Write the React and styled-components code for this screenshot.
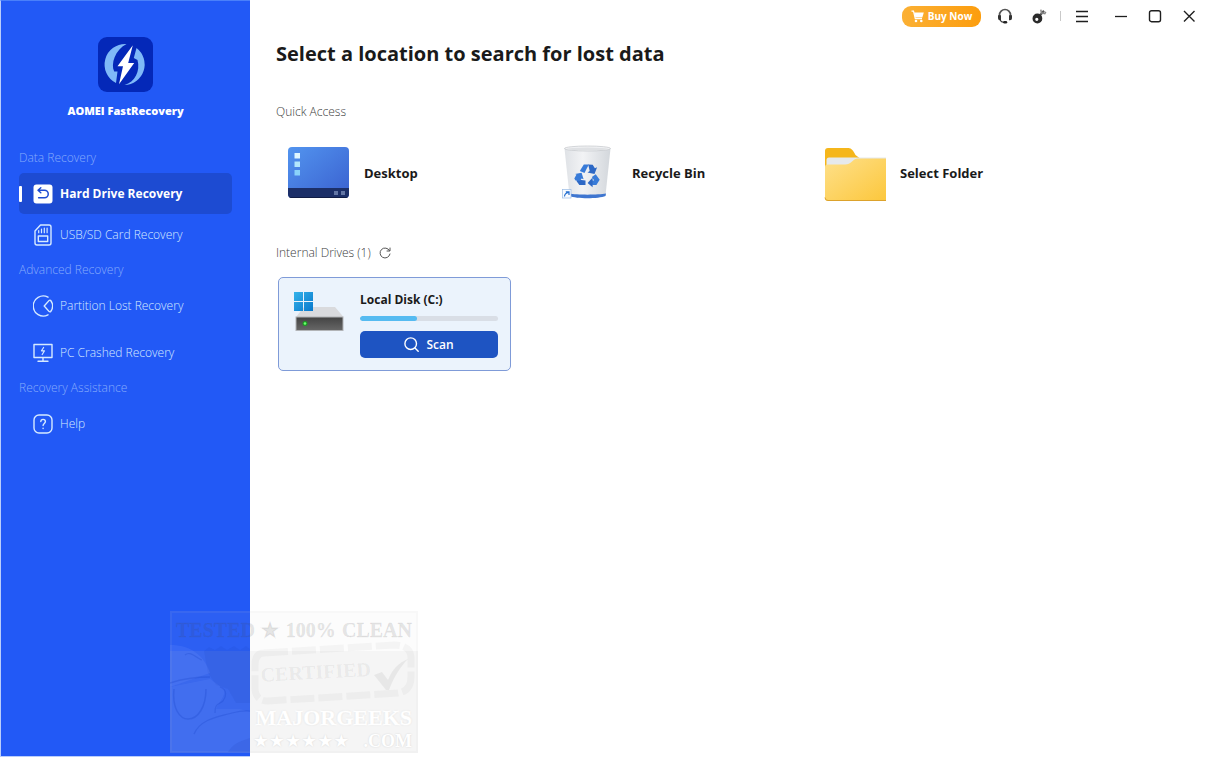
import React from 'react';
import styled, {createGlobalStyle, css} from 'styled-components';

const GlobalStyle = createGlobalStyle`
    * {
        box-sizing: border-box;
    }

    body {
        margin: 0;
        background: #fff;
        color: #1a1a1a;
        font-family: "Open Sans", "Noto Sans", sans-serif;
        font-size: 12px;
        line-height: 20px;
    }

    button {
        font-family: inherit;
        border: none;
        padding: 0;
        background: none;
        cursor: pointer;
    }

    svg {
        display: block;
        flex: none;
    }
`;

const Window = styled.div`
    position: relative;
    display: flex;
    min-height: 100vh;
    overflow: hidden;
`;

const Sidebar = styled.aside`
    display: flex;
    flex-direction: column;
    flex: none;
    width: 250px;
    padding: 36px 18px 0;
    background: #2259f6;
    border: 1px solid #b9cdfb;
    border-top-color: #4a80fa;
    border-right: none;
`;

const Brand = styled.div`
    display: flex;
    flex-direction: column;
    align-items: center;
    gap: 9px;
    margin-bottom: 27px;
    color: #fff;
    font-size: 11px;
    font-weight: 800;
`;

const NavGroup = styled.nav`
    display: flex;
    flex-direction: column;
    margin-bottom: 5px;
`;

const NavTitle = styled.h2`
    margin: 0 0 5px;
    color: #86abfc;
    font-size: 12px;
    line-height: 20px;
    font-weight: 300;
`;

const NavList = styled.div`
    display: flex;
    flex-direction: column;
    gap: ${p => p.$loose ? '6px' : '0'};
`;

const NavLink = styled.a`
    display: flex;
    align-items: center;
    gap: 7px;
    height: 41px;
    border-radius: 5px;
    color: #d6eaff;
    font-size: 12px;
    font-weight: 300;
    text-decoration: none;

    ${p => p.$active && css`
        background: #1d4bd2;
        color: #fff;
        font-weight: 700;
    `}
`;

const Marker = styled.span`
    width: 3px;
    height: 16px;
    margin-right: 4px;
    border-radius: 1px;
    background: ${p => p.$active ? '#fff' : 'transparent'};
`;

const Main = styled.main`
    flex: 1;
    min-width: 0;
`;

const TitleBar = styled.header`
    display: flex;
    align-items: center;
    justify-content: flex-end;
    gap: 2px;
    height: 32px;
`;

const BuyButton = styled.button`
    display: flex;
    align-items: center;
    justify-content: center;
    gap: 4px;
    width: 79px;
    height: 21px;
    margin-right: 6px;
    border-radius: 9px;
    background: linear-gradient(90deg, #fbb034, #fc9d0e);
    color: #fff;
    font-size: 10px;
    font-weight: 700;
`;

const ToolButton = styled.button`
    display: flex;
    align-items: center;
    justify-content: center;
    width: 32px;
    height: 32px;
    color: #1f1f1f;
`;

const WindowControls = styled.div`
    display: flex;
    gap: 2px;
    margin-left: 5px;
`;

const Divider = styled.span`
    width: 1px;
    height: 10px;
    margin: 0 3px;
    background: #c9c9c9;
`;

const Content = styled.div`
    padding: 6px 26px 0;
`;

const Title = styled.h1`
    margin: 0 0 32px;
    font-size: 20px;
    line-height: 32px;
    font-weight: 700;
`;

const Section = styled.section`
    margin-bottom: 33px;
`;

const SectionTitle = styled.h2`
    display: flex;
    align-items: center;
    gap: 8px;
    margin: 0 0 14px;
    color: #3c3c3c;
    font-size: 12px;
    line-height: 20px;
    font-weight: 300;
`;

const IconButton = styled.button`
    color: #555;
`;

const QuickGrid = styled.div`
    display: grid;
    grid-template-columns: repeat(auto-fill, 268px);
`;

const QuickItem = styled.button`
    display: flex;
    align-items: center;
    gap: 14px;
    height: 74px;
    padding-left: 10px;
    color: #1a1a1a;
    font-size: 13px;
    font-weight: 700;
`;

const DriveGrid = styled.div`
    display: grid;
    grid-template-columns: repeat(auto-fill, 233px);
    gap: 16px;
    padding-left: 2px;
`;

const Drive = styled.article`
    display: flex;
    gap: 15px;
    padding: 11px 12px 12px 14px;
    border: 1px solid #7f9bd8;
    border-radius: 5px;
    background: #ebf3fc;
`;

const DriveBody = styled.div`
    display: flex;
    flex-direction: column;
    flex: 1;
    min-width: 0;
`;

const DriveName = styled.h3`
    margin: 0 0 5px;
    font-size: 12px;
    line-height: 22px;
    font-weight: 700;
`;

const Usage = styled.div`
    height: 5px;
    margin-bottom: 10px;
    border-radius: 3px;
    background: #d9dee6;
    overflow: hidden;
`;

const Used = styled.div`
    height: 100%;
    border-radius: 3px;
    background: #56bbf1;
`;

const ScanButton = styled.button`
    display: flex;
    align-items: center;
    justify-content: center;
    gap: 7px;
    height: 27px;
    border-radius: 5px;
    background: #1e54c2;
    color: #fff;
    font-size: 12px;
    font-weight: 600;
`;

// Translucent stamp laid over the lower part of the window
const Stamp = styled.div`
    position: absolute;
    left: 170px;
    bottom: 4px;
    width: 248px;
    height: 142px;
    padding: 6px 6px 0;
    background: rgba(200, 200, 200, 0.06);
    font-family: "Liberation Serif", serif;
    font-weight: 700;
    pointer-events: none;
`;

const StampArt = styled.svg`
    position: absolute;
    left: 0;
    top: 0;
`;

const StampTop = styled.div`
    position: relative;
    display: flex;
    justify-content: space-between;
    color: rgba(70, 70, 70, 0.12);
    font-size: 20px;
    line-height: 26px;
    white-space: nowrap;
    -webkit-text-stroke: 1px rgba(70, 70, 70, 0.06);
`;

const StampMark = styled.div`
    position: relative;
    margin: 13px 41px 0 0;
    color: rgba(80, 80, 80, 0.08);
    font-size: 20px;
    line-height: 36px;
    text-align: right;
    transform: rotate(-3deg);
`;

const StampName = styled.div`
    position: relative;
    margin-top: 13px;
    color: #fff;
    font-size: 22px;
    line-height: 26px;
    text-align: right;
    text-shadow: 0 0 2px rgba(0, 0, 0, 0.14);
    -webkit-text-stroke: 1px #fff;
    paint-order: stroke;
`;

const StampFoot = styled.div`
    position: relative;
    display: flex;
    justify-content: flex-end;
    align-items: center;
    gap: 14px;
    color: #fff;
    font-size: 18px;
    line-height: 20px;
    text-shadow: 0 0 2px rgba(0, 0, 0, 0.14);
`;

const Stars = styled.span`
    font-family: "DejaVu Sans", sans-serif;
    font-weight: 400;
    font-size: 18px;
`;

const Logo = () => (
    <svg width="55" height="55" viewBox="0 0 55 55">
        <rect width="55" height="55" rx="9" fill="#0428b8" />
        <path d="M28.500 7A20.600 20.600 0 0 0 18 46L19.500 34.500h-3.300C12.500 27 17 13 28.500 7Z" fill="#7fb9f8" />
        <path d="M38.500 11A20.600 20.600 0 0 1 26.500 48C37 45 42.500 34 39.500 23L35.800 21Z" fill="#7fb9f8" />
        <path d="M35 8 19.500 29.300h5.500L21 47.200 36.200 26h-6L34.800 8.300Z" fill="#fff" />
    </svg>
);

const stroke = {
    fill: 'none',
    stroke: 'currentColor',
    strokeLinecap: 'round',
    strokeLinejoin: 'round'
};

const HardDriveIcon = () => (
    <svg width="20" height="20" viewBox="0 0 20 20">
        <rect x="0.500" y="0.500" width="19" height="19" rx="3" fill="#fff" />
        <path
            d="M7.800 3.800 5 6.300l2.800 2.500M5.300 6.300h6.200a3.700 3.700 0 0 1 0 7.500H5.600"
            fill="none" stroke="#1d4bd2" strokeWidth="1.500" strokeLinecap="round" strokeLinejoin="round"
        />
    </svg>
);

const SdCardIcon = () => (
    <svg width="20" height="22" viewBox="0 0 20 22" {...stroke} strokeWidth="1.400">
        <path d="M7.500 1H16a2 2 0 0 1 2 2v16a2 2 0 0 1-2 2H4a2 2 0 0 1-2-2V7Z" />
        <path d="M5.700 6.500v2.200M8.500 5v3.700M11.300 4v4.700M14.100 4v4.700" strokeWidth="1.200" />
        <rect x="5.300" y="12" width="9.400" height="5.500" />
    </svg>
);

const PartitionIcon = () => (
    <svg width="20" height="22" viewBox="0 0 20 22" {...stroke} strokeWidth="1.400">
        <path d="M15 2.200A10 10 0 1 0 15 19.800" />
        <path d="m11.200 11 5-5.600a1 1 0 0 1 1.500.1 9.400 9.400 0 0 1 0 11 1 1 0 0 1-1.500.1Z" />
    </svg>
);

const CrashedIcon = () => (
    <svg width="20" height="20" viewBox="0 0 20 20" {...stroke} strokeWidth="1.400">
        <path d="M1 1.500h18v13H1ZM10 14.500V18M5 18.200h10" />
        <path d="M10.600 4.500 8.500 7.800h3L9.200 11.500" strokeWidth="1.200" />
    </svg>
);

const HelpIcon = () => (
    <svg width="20" height="20" viewBox="0 0 20 20" {...stroke} strokeWidth="1.400">
        <rect x="1" y="1" width="18" height="18" rx="5" />
        <path d="M7.800 7.600c0-3 4.600-3 4.600 0 0 1.800-2.300 1.900-2.300 4M10.100 14.300v.2" />
    </svg>
);

const CartIcon = () => (
    <svg width="13" height="13" viewBox="0 0 13 13">
        <path d="M0.500 1.200h2l1.800 7.500h6.700" fill="none" stroke="#fff" strokeWidth="1.200" />
        <path d="M3 2.500h9.800L11.300 7.600H4.300Z" fill="#fff" />
        <circle cx="5" cy="11" r="1.300" fill="#fff" />
        <circle cx="10.300" cy="11" r="1.300" fill="#fff" />
    </svg>
);

const HeadsetIcon = () => (
    <svg width="16" height="16" viewBox="0 0 16 16">
        <path d="M2.500 9V7a5.500 5.500 0 0 1 11 0v2" fill="none" stroke="#555" strokeWidth="1.700" />
        <path d="M1 7.300h3v5H3a2 2 0 0 1-2-2ZM15 7.300h-3v5h1a2 2 0 0 0 2-2Z" fill="#333" />
        <path d="M3 12c.8 1.500 2 2.200 4 2.300" fill="none" stroke="#333" strokeWidth="1.200" />
        <rect x="6.200" y="13" width="4" height="2.400" rx="1.200" fill="#222" />
    </svg>
);

const KeyIcon = () => (
    <svg width="16" height="16" viewBox="0 0 16 16">
        <path d="M8 8.500 13 2.800" stroke="#555" strokeWidth="2.200" />
        <path d="m9.800 1.600.6 3.200 3.400.8 1-1.800" fill="none" stroke="#888" strokeWidth="1.500" />
        <path fillRule="evenodd" d="M6.400 5.600a4.900 4.900 0 1 1 0 9.800 4.900 4.900 0 0 1 0-9.800ZM5.800 9.700a1.600 1.600 0 1 0 0 3.200 1.600 1.600 0 0 0 0-3.200Z" fill="#2b2b2b" />
    </svg>
);

const MenuIcon = () => (
    <svg width="14" height="14" viewBox="0 0 14 14">
        <path d="M1 2.500h12M1 7.500h12M1 12.500h12" stroke="currentColor" strokeWidth="1.400" />
    </svg>
);

const MinimizeIcon = () => (
    <svg width="14" height="14" viewBox="0 0 14 14">
        <path d="M1 7.500h12" stroke="currentColor" strokeWidth="1.300" />
    </svg>
);

const MaximizeIcon = () => (
    <svg width="14" height="14" viewBox="0 0 14 14">
        <rect x="1.500" y="1.700" width="11" height="11" rx="2" fill="none" stroke="currentColor" strokeWidth="1.400" />
    </svg>
);

const CloseIcon = () => (
    <svg width="14" height="14" viewBox="0 0 14 14">
        <path d="m2 2 10.500 10.500M12.500 2 2 12.500" stroke="currentColor" strokeWidth="1.400" />
    </svg>
);

const RefreshIcon = () => (
    <svg width="12" height="12" viewBox="0 0 12 12" {...stroke}>
        <path d="M10.500 3.600A5 5 0 1 0 11 7" />
        <path d="M11 1v3H8" />
    </svg>
);

const SearchIcon = () => (
    <svg width="15" height="15" viewBox="0 0 15 15" {...stroke} strokeWidth="1.400">
        <circle cx="6.700" cy="6.700" r="5.800" />
        <path d="m11 11 3.200 3.200" />
    </svg>
);

const DesktopIcon = () => (
    <svg width="64" height="56" viewBox="0 0 64 56">
        <defs>
            <linearGradient id="desk" x1="0" y1="0" x2="1" y2="1">
                <stop offset="0" stopColor="#5294ef" />
                <stop offset="1" stopColor="#3a60cf" />
            </linearGradient>
            <clipPath id="deskClip"><rect x="2" y="2" width="61" height="51" rx="4" /></clipPath>
        </defs>
        <g clipPath="url(#deskClip)">
            <path d="M2 2h61v51H2Z" fill="url(#desk)" />
            <path d="M2 43h61v10H2Z" fill="#1c2f68" />
            <path d="M2 52h61v1H2Z" fill="#111d45" />
        </g>
        <path d="M8.500 8h5.500v5.500H8.500Z" fill="#dff6fe" />
        <path d="M8.500 16.500h5.500V22H8.500Z" fill="#b3e7fc" />
        <path d="M8.500 25h5.500v5.500H8.500Z" fill="#8ad3fa" />
        <path d="M48 46h4v4h-4ZM55 46h4v4h-4Z" fill="#6376a5" />
    </svg>
);

const BinIcon = () => (
    <svg width="64" height="56" viewBox="0 0 64 56">
        <defs>
            <linearGradient id="bin" x1="0" x2="1">
                <stop offset="0" stopColor="#dfe2e6" />
                <stop offset="0.400" stopColor="#f2f3f5" />
                <stop offset="1" stopColor="#d3d7dc" />
            </linearGradient>
        </defs>
        <path d="M10.500 3.500h46l-5 47c-6 3-30 3-36 0Z" fill="url(#bin)" />
        <path d="M15 48.500c8 1.500 29 1.500 37 0l-.5 2.500c-7 3-29 3-36 0Z" fill="#3f76d0" />
        <ellipse cx="33.500" cy="3.500" rx="23" ry="2.500" fill="#f1f2f4" stroke="#c3c6ca" strokeWidth="0.700" />
        <ellipse cx="33.500" cy="4" rx="21" ry="1.400" fill="#dfe1e4" />
        <g fill="#387bd8">
            <path d="m25.800 26 4-6.500h5L30.500 28Z" />
            <path d="m34.200 19.500 4.500.2 2.200 3.600 2.200-1-2.600 6.600-7-1.500 2.200-1.300Z" fill="#2d68c5" />
            <path d="m41.700 29.300 4 5.500-3.300 5.200h-4.200l-.5-4.500h2.500l-2.300-3.500Z" />
            <path d="M38.600 34.200v8l-5-4.200 5-5.500Z" fill="#2d68c5" />
            <path d="M31.500 35.600v4.400h-6.200L22.500 36l.8-1.400Z" fill="#2d68c5" />
            <path d="m21 29 6.600-1.200 2 6.500-2-.9-1.600 2.700-4.500-.5-1.200-2 2.200-4Z" />
        </g>
        <rect x="8.500" y="44.500" width="8.500" height="8.500" fill="#f8fbff" stroke="#9bbbe4" strokeWidth="0.700" />
        <path d="M10.500 51.500c0-2.500 1.500-3.500 4-4M11.800 46.800h3.200v3.200" fill="none" stroke="#256fd0" strokeWidth="1.200" />
    </svg>
);

const FolderIcon = () => (
    <svg width="64" height="56" viewBox="0 0 64 56">
        <defs>
            <linearGradient id="folder" x1="0" y1="0" x2="1" y2="1">
                <stop offset="0" stopColor="#fee08a" />
                <stop offset="1" stopColor="#fcc73c" />
            </linearGradient>
        </defs>
        <path d="M3 20V6a3 3 0 0 1 3-3h20.500c3 0 5 3 7 7l4 3H64v10H3Z" fill="#f5b61b" />
        <path d="M4.500 21v-6a2.500 2.500 0 0 1 2.500-2.500h57V21Z" fill="#e6e9eb" />
        <path d="M3 22c0-1.700 1-2.500 3-2.500h17c3 0 5-1.200 7-3 2-2 3.500-3 6-3h28V56H6a3 3 0 0 1-3-3Z" fill="url(#folder)" />
        <path d="M3 52.500a3 3 0 0 0 3 3h58" fill="none" stroke="#dca22c" strokeWidth="1" />
    </svg>
);

const DiskIcon = () => (
    <svg width="52" height="44" viewBox="0 0 52 44">
        <defs>
            <linearGradient id="diskFront" x1="0" y1="0" x2="0" y2="1">
                <stop offset="0" stopColor="#444" />
                <stop offset="1" stopColor="#666" />
            </linearGradient>
            <linearGradient id="win" x1="0" y1="0" x2="1" y2="1">
                <stop offset="0" stopColor="#35b3ea" />
                <stop offset="1" stopColor="#0878cc" />
            </linearGradient>
        </defs>
        <path d="m3 28 8-10h31l8.500 10Z" fill="#d9dadd" />
        <path d="M2.500 27.500h48V42h-48Z" fill="#b2b4b7" />
        <path d="M3.500 28.500h46V41h-46Z" fill="url(#diskFront)" />
        <circle cx="12" cy="34.500" r="2.500" fill="#1c9a24" />
        <circle cx="12" cy="34.500" r="1.300" fill="#6dff70" />
        <path d="M1 3h9v9H1ZM11 3h9v9h-9ZM1 13h9v9H1ZM11 13h9v9h-9Z" fill="url(#win)" />
    </svg>
);

const StampDrawing = () => (
    <StampArt width="248" height="142" viewBox="0 0 248 142">
        <path d="M0 40h248v102H0Z" fill="#bebebe" opacity="0.100" />
        <path d="M1 1h246v140H1Z" fill="none" stroke="#c8c8c8" strokeWidth="2" opacity="0.080" />
        {/* torn shade behind the soldier */}
        <path d="M34 40l5-4 6 3 6-4 6 4 7-4 6 4 6-4 4 3v54H66l-8-14-12-4-8-12Z" fill="#173cae" opacity="0.100" />
        {/* helmet, goggles and hand */}
        <path d="M0 34c20 0 34 10 40 28L0 76Z" fill="#7d9cff" opacity="0.160" />
        <path d="M0 76l40-8 14 10c2 6-4 12-8 20h24l10 3v40H0Z" fill="#7d9cff" opacity="0.120" />
        <path d="M0 72c12-4 26-6 40-6M4 78c-2 20 6 30 14 30 10 0 18-12 18-30" fill="none" stroke="#1843c8" strokeWidth="1.500" opacity="0.280" />
        <path d="M24 123c6-14 22-17 34-20 8-2 14-4 22-3M50 76c8 3 6 10 3 14-5 4-8 2-8 12M15 44c6-5 12 4 17 5" fill="none" stroke="#1843c8" strokeWidth="1.200" opacity="0.280" />
        <path d="M58 141c5-8 10-10 22-14v14Z" fill="#173cae" opacity="0.120" />
        {/* dashed frame with the tick */}
        <path d="M94 42 L224 34 Q240 34 241 46 V66 Q241 80 228 82 L98 90 Q86 90 85 78 V54 Q85 42 94 42Z" fill="none" stroke="#505050" strokeWidth="7" strokeDasharray="24 4" opacity="0.045" />
        <path d="M204 64l8-3 6 8c4-10 10-17 20-21-8 8-14 18-19 31h-3Z" fill="#505050" opacity="0.080" />
    </StampArt>
);

const groups = [
    {
        title: 'Data Recovery',
        items: [
            {label: 'Hard Drive Recovery', Icon: HardDriveIcon, active: true},
            {label: 'USB/SD Card Recovery', Icon: SdCardIcon}
        ]
    },
    {
        title: 'Advanced Recovery',
        loose: true,
        items: [
            {label: 'Partition Lost Recovery', Icon: PartitionIcon},
            {label: 'PC Crashed Recovery', Icon: CrashedIcon}
        ]
    },
    {
        title: 'Recovery Assistance',
        items: [{label: 'Help', Icon: HelpIcon}]
    }
];

const locations = [
    {label: 'Desktop', Icon: DesktopIcon},
    {label: 'Recycle Bin', Icon: BinIcon},
    {label: 'Select Folder', Icon: FolderIcon}
];

const drives = [{name: 'Local Disk (C:)', used: 41}];

export default function App() {
    return (
        <Window>
            <GlobalStyle />
            <Sidebar>
                <Brand>
                    <Logo />
                    <span>AOMEI FastRecovery</span>
                </Brand>
                {groups.map(group => (
                    <NavGroup key={group.title} aria-label={group.title}>
                        <NavTitle>{group.title}</NavTitle>
                        <NavList $loose={group.loose}>
                            {group.items.map(({label, Icon, active}) => (
                                <NavLink key={label} href="#" $active={active}>
                                    <Marker $active={active} />
                                    <Icon />
                                    {label}
                                </NavLink>
                            ))}
                        </NavList>
                    </NavGroup>
                ))}
            </Sidebar>
            <Main>
                <TitleBar>
                    <BuyButton><CartIcon />Buy Now</BuyButton>
                    <ToolButton aria-label="Support"><HeadsetIcon /></ToolButton>
                    <ToolButton aria-label="Register"><KeyIcon /></ToolButton>
                    <Divider />
                    <ToolButton aria-label="Menu"><MenuIcon /></ToolButton>
                    <WindowControls>
                        <ToolButton aria-label="Minimize"><MinimizeIcon /></ToolButton>
                        <ToolButton aria-label="Maximize"><MaximizeIcon /></ToolButton>
                        <ToolButton aria-label="Close"><CloseIcon /></ToolButton>
                    </WindowControls>
                </TitleBar>
                <Content>
                    <Title>Select a location to search for lost data</Title>
                    <Section>
                        <SectionTitle>Quick Access</SectionTitle>
                        <QuickGrid>
                            {locations.map(({label, Icon}) => (
                                <QuickItem key={label}><Icon />{label}</QuickItem>
                            ))}
                        </QuickGrid>
                    </Section>
                    <Section>
                        <SectionTitle>
                            Internal Drives ({drives.length})
                            <IconButton aria-label="Refresh"><RefreshIcon /></IconButton>
                        </SectionTitle>
                        <DriveGrid>
                            {drives.map(drive => (
                                <Drive key={drive.name}>
                                    <DiskIcon />
                                    <DriveBody>
                                        <DriveName>{drive.name}</DriveName>
                                        <Usage><Used style={{width: `${drive.used}%`}} /></Usage>
                                        <ScanButton><SearchIcon />Scan</ScanButton>
                                    </DriveBody>
                                </Drive>
                            ))}
                        </DriveGrid>
                    </Section>
                </Content>
            </Main>
            <Stamp>
                <StampDrawing />
                <StampTop><span>TESTED</span><span>★</span><span>100%</span><span>CLEAN</span></StampTop>
                <StampMark>CERTIFIED</StampMark>
                <StampName>MAJORGEEKS</StampName>
                <StampFoot><Stars>★★★★★★</Stars>.COM</StampFoot>
            </Stamp>
        </Window>
    );
}
